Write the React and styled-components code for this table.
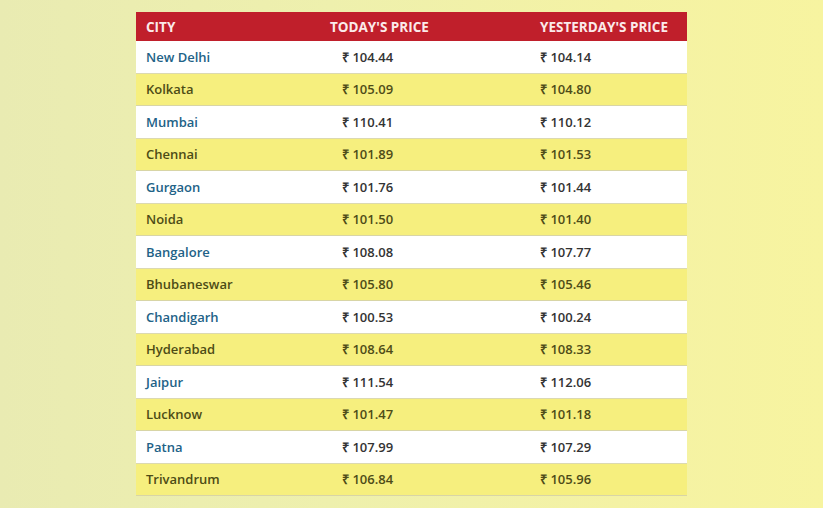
import React from 'react';
import styled, { createGlobalStyle } from 'styled-components';

const PRICES = [
  ['New Delhi', '104.44', '104.14'],
  ['Kolkata', '105.09', '104.80'],
  ['Mumbai', '110.41', '110.12'],
  ['Chennai', '101.89', '101.53'],
  ['Gurgaon', '101.76', '101.44'],
  ['Noida', '101.50', '101.40'],
  ['Bangalore', '108.08', '107.77'],
  ['Bhubaneswar', '105.80', '105.46'],
  ['Chandigarh', '100.53', '100.24'],
  ['Hyderabad', '108.64', '108.33'],
  ['Jaipur', '111.54', '112.06'],
  ['Lucknow', '101.47', '101.18'],
  ['Patna', '107.99', '107.29'],
  ['Trivandrum', '106.84', '105.96'],
];

const GlobalStyle = createGlobalStyle`
  html, body {
    margin: 0;
    padding: 0;
  }
  body {
    font-family: "Open Sans", "Liberation Sans", sans-serif;
  }
`;

const Page = styled.div`
  width: 823px;
  height: 508px;
  box-sizing: border-box;
  padding: 12px 0 0 136px;
  background: linear-gradient(90deg, #e9ebb2 0%, #eef0ad 40%, #f4f2a4 75%, #f7f4a0 100%);
  overflow: hidden;
`;

const Table = styled.div`
  width: 551px;
  display: grid;
  grid-template-columns: 184px 210px 157px;
`;

const HeadCell = styled.div`
  height: 29px;
  display: flex;
  align-items: center;
  padding-left: 10px;
  background: #c01f2b;
  color: #fbeaea;
  font-size: 13.5px;
  font-weight: 700;
  text-transform: uppercase;
`;

const Cell = styled.div`
  height: 32.5px;
  box-sizing: border-box;
  display: flex;
  align-items: center;
  padding-left: ${p => p.$indent || 10}px;
  background: ${p => (p.$odd ? '#f6ef7e' : '#ffffff')};
  border-bottom: 1px solid ${p => (p.$odd ? '#d8d5a6' : '#dcd9b0')};
  font-size: 13px;
  font-weight: 600;
  color: ${p => (p.$odd ? '#4e4c18' : '#333333')};
`;

const City = styled(Cell)`
  color: ${p => (p.$odd ? '#4d4c16' : '#226287')};
`;

export default () => (
  <Page>
    <GlobalStyle />
    <Table>
      <HeadCell>City</HeadCell>
      <HeadCell>Today's Price</HeadCell>
      <HeadCell>Yesterday's Price</HeadCell>
      {PRICES.map(([city, today, yesterday], i) => (
        <React.Fragment key={city}>
          <City $odd={i % 2 === 1}>{city}</City>
          <Cell $odd={i % 2 === 1} $indent={22}>₹ {today}</Cell>
          <Cell $odd={i % 2 === 1}>₹ {yesterday}</Cell>
        </React.Fragment>
      ))}
    </Table>
  </Page>
);
